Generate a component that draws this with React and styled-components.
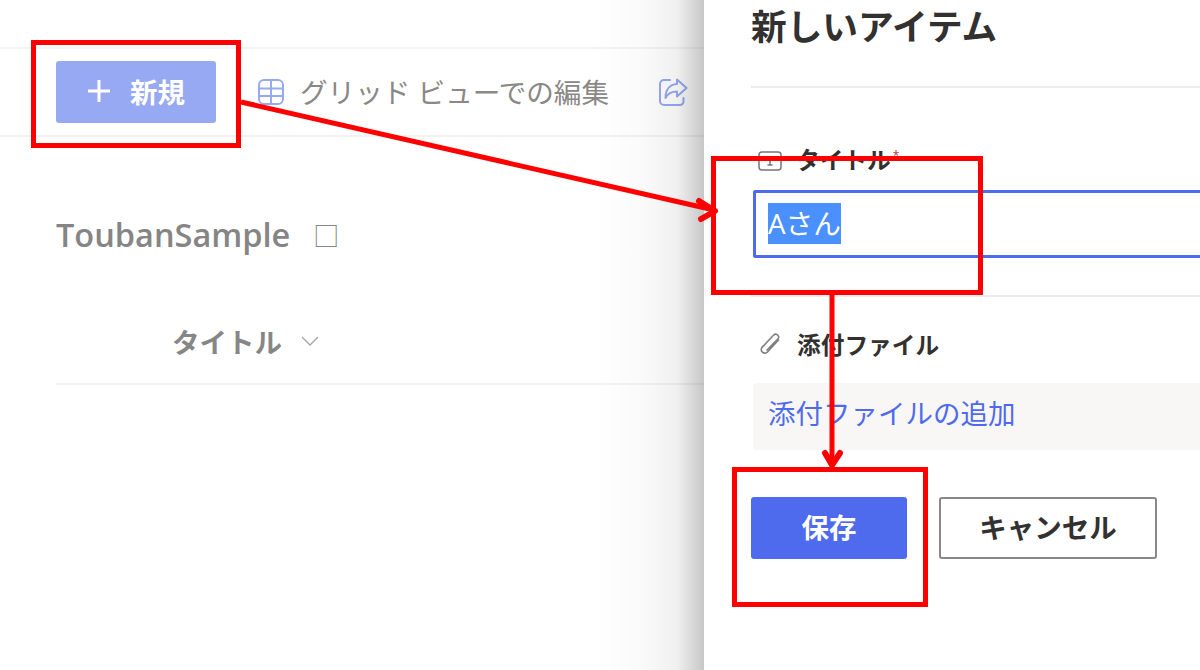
import React from 'react'
import styled, { createGlobalStyle } from 'styled-components'

const Global = createGlobalStyle`
  html, body { margin: 0; padding: 0; background: #fff; }
  body { font-family: "Open Sans", "Noto Sans CJK JP", sans-serif; }
`

const Page = styled.div`
  position: relative;
  display: flex;
  width: 1200px;
  height: 670px;
  overflow: hidden;
`

const ListPane = styled.div`
  position: relative;
  flex: 0 0 704px;
  width: 704px;
  min-width: 0;
  padding-top: 47px;
  box-sizing: border-box;
  overflow: hidden;
  &::after {
    content: "";
    position: absolute;
    top: 0;
    right: 0;
    bottom: 0;
    width: 110px;
    background: linear-gradient(to right, rgba(0,0,0,0) 0%, rgba(0,0,0,.02) 45%, rgba(0,0,0,.06) 75%, rgba(0,0,0,.22) 100%);
  }
`

const Toolbar = styled.div`
  display: flex;
  align-items: center;
  height: 90px;
  padding-left: 56px;
  border-top: 2px solid #f4f4f4;
  border-bottom: 2px solid #f2f2f2;
  box-sizing: border-box;
`

const NewButton = styled.div`
  display: flex;
  flex-shrink: 0;
  align-items: center;
  justify-content: center;
  gap: 19px;
  width: 160px;
  height: 62px;
  margin-right: 41px;
  padding-bottom: 2px;
  box-sizing: border-box;
  border-radius: 3px;
  background: #98a9f3;
  color: #fff;
  font-size: 27.5px;
  font-weight: 700;
`

const ToolItem = styled.div`
  display: flex;
  flex-shrink: 0;
  align-items: center;
  gap: 15px;
  margin-right: 49px;
  color: #8a8886;
  font-size: 27.6px;
  white-space: nowrap;
`

const ToolLabel = styled.span`
  margin-top: -2px;
`

const ListTitle = styled.div`
  display: flex;
  align-items: center;
  gap: 23px;
  margin: 73px 0 0 56px;
  height: 48px;
  color: #858585;
  font-size: 32.5px;
  font-weight: 600;
`

const Tofu = styled.span`
  color: #858585;
  font-size: 26px;
  font-weight: 400;
  font-family: "Noto Sans CJK JP", sans-serif;
`

const ColumnHead = styled.div`
  display: flex;
  align-items: center;
  gap: 18px;
  height: 127px;
  margin-left: 56px;
  padding: 40px 0 0 116px;
  box-sizing: border-box;
  border-bottom: 2px solid #f3f3f3;
  color: #868686;
  font-size: 27.5px;
  font-weight: 700;
`

const Panel = styled.div`
  flex: 1;
  background: #fff;
  padding-left: 47px;
  min-width: 0;
`

const PanelTitle = styled.div`
  display: flex;
  align-items: center;
  height: 88px;
  padding-bottom: 38px;
  box-sizing: border-box;
  border-bottom: 2px solid #ededed;
  color: #323130;
  font-size: 35.7px;
  font-weight: 700;
  white-space: nowrap;
`

const TitleField = styled.div`
  padding-top: 51px;
`

const FieldLabel = styled.div`
  display: flex;
  align-items: center;
  gap: ${({ $gap }) => $gap || 15}px;
  height: 40px;
  padding-left: 7px;
  color: #323130;
  font-size: 23.7px;
  font-weight: 700;
`

const Required = styled.span`
  margin: -8px 0 0 -12px;
  color: #c5352b;
  font-size: 12px;
  font-weight: 400;
`

const TextField = styled.div`
  display: flex;
  align-items: center;
  height: 68px;
  margin: 11px 0 37px 2px;
  padding-left: 12px;
  box-sizing: border-box;
  border: 3.500px solid #4f6bed;
  border-right: 0;
  border-radius: 3px 0 0 3px;
`

const Selected = styled.span`
  display: flex;
  align-items: center;
  height: 41px;
  margin-top: -2px;
  background: #4a90ff;
  color: #fff;
  font-size: 27.7px;
  line-height: 41px;
`

const FieldBlock = styled.div`
  border-top: 2px solid #ededed;
  padding-top: 27px;
`

const AddFile = styled.div`
  display: flex;
  align-items: center;
  height: 67px;
  margin: 19px 0 47px 2px;
  padding: 0 0 10px 15px;
  box-sizing: border-box;
  border-radius: 3px 0 0 3px;
  background: #f8f7f6;
  color: #4f6bed;
  font-size: 27.5px;
  white-space: nowrap;
`

const Actions = styled.div`
  display: flex;
  gap: 32px;
`

const ActionButton = styled.div`
  display: flex;
  align-items: center;
  justify-content: center;
  box-sizing: border-box;
  width: ${({ $primary }) => ($primary ? '156px' : '218px')};
  height: 62px;
  padding-bottom: 5px;
  border: ${({ $primary }) => ($primary ? '0' : '2px solid #8a8886')};
  border-radius: 3px;
  background: ${({ $primary }) => ($primary ? '#4f6bed' : '#fff')};
  color: ${({ $primary }) => ($primary ? '#fff' : '#323130')};
  font-size: 27.5px;
  font-weight: 700;
`

const Callout = styled.div`
  position: absolute;
  left: ${({ $x }) => $x}px;
  top: ${({ $y }) => $y}px;
  width: ${({ $w }) => $w}px;
  height: ${({ $h }) => $h}px;
  box-sizing: border-box;
  border: 5px solid #ff0000;
`

const ArrowLayer = styled.svg`
  position: absolute;
  left: 0;
  top: 0;
  pointer-events: none;
`

const PlusIcon = () => (
  <svg width="24" height="24" viewBox="0 0 24 24" fill="none" stroke="#fff" strokeWidth="3">
    <path d="M12 1v22M1 12h22" />
  </svg>
)

const GridIcon = () => (
  <svg width="28" height="28" viewBox="0 0 28 28" fill="none" stroke="#98a9f3" strokeWidth="2">
    <rect x="2" y="2" width="24" height="24" rx="5" />
    <path d="M2 10.500h24M2 18h24M14 2V26" />
  </svg>
)

const ShareIcon = () => (
  <svg width="30" height="30" viewBox="0 0 30 30" fill="none" stroke="#98a9f3" strokeWidth="2" strokeLinejoin="round" strokeLinecap="round">
    <path d="M12 3H6a4 4 0 0 0-4 4v17a4 4 0 0 0 4 4h16a3.500 3.500 0 0 0 3.500-3.500V21" />
    <path d="M19 2.500 28.500 11 19 19.500v-5c-5 0-9 1.500-11.500 6.500 0-8 4-13.500 11.500-14z" />
  </svg>
)

const ChevronIcon = () => (
  <svg width="20" height="12" viewBox="0 0 20 12" fill="none" stroke="#a6a6a6" strokeWidth="1.300">
    <path d="M2 2l8 8 8-8" />
  </svg>
)

const TextTypeIcon = () => (
  <svg width="24" height="20" viewBox="0 0 24 20" fill="none" stroke="#767676" strokeWidth="1.500" style={{ marginTop: 4 }}>
    <rect x="1" y="1" width="22" height="18" rx="3" />
    <path d="M9 6h6M12 6v8M9.500 14h5" />
  </svg>
)

const ClipIcon = () => (
  <svg width="24" height="24" viewBox="0 0 24 24" fill="none" stroke="#808080" strokeWidth="1.600" strokeLinecap="round">
    <path d="M20.500 8 9.500 20a3.600 3.600 0 0 1-5.300-4.900L15.500 3.200a2.900 2.900 0 0 1 4.300 3.900L9 18" />
  </svg>
)

const Arrows = () => (
  <ArrowLayer width="1200" height="670" fill="none" stroke="#ff0000" strokeWidth="5" strokeLinejoin="round">
    <path d="M241 102 714 210" />
    <path d="M699 201 715 211 701 219" strokeWidth="6" strokeLinecap="round" />
    <path d="M832 295V464" />
    <path d="M825 453 832 465 840 453" strokeWidth="6" strokeLinecap="round" />
  </ArrowLayer>
)

export default function App() {
  return (
    <Page>
      <Global />
      <ListPane>
        <Toolbar>
          <NewButton>
            <PlusIcon />
            新規
          </NewButton>
          <ToolItem>
            <GridIcon />
            <ToolLabel>グリッド ビューでの編集</ToolLabel>
          </ToolItem>
          <ToolItem>
            <ShareIcon />
          </ToolItem>
        </Toolbar>
        <ListTitle>
          ToubanSample
          <Tofu>□</Tofu>
        </ListTitle>
        <ColumnHead>
          タイトル
          <ChevronIcon />
        </ColumnHead>
      </ListPane>
      <Panel>
        <PanelTitle>新しいアイテム</PanelTitle>
        <TitleField>
          <FieldLabel $gap={14}>
            <TextTypeIcon />
            タイトル
            <Required>*</Required>
          </FieldLabel>
          <TextField>
            <Selected>Aさん</Selected>
          </TextField>
        </TitleField>
        <FieldBlock>
          <FieldLabel>
            <ClipIcon />
            添付ファイル
          </FieldLabel>
          <AddFile>添付ファイルの追加</AddFile>
          <Actions>
            <ActionButton $primary>保存</ActionButton>
            <ActionButton>キャンセル</ActionButton>
          </Actions>
        </FieldBlock>
      </Panel>
      <Callout $x={31} $y={40} $w={210} $h={108} />
      <Callout $x={711} $y={156} $w={272} $h={139} />
      <Callout $x={732} $y={467} $w={196} $h={140} />
      <Arrows />
    </Page>
  )
}
